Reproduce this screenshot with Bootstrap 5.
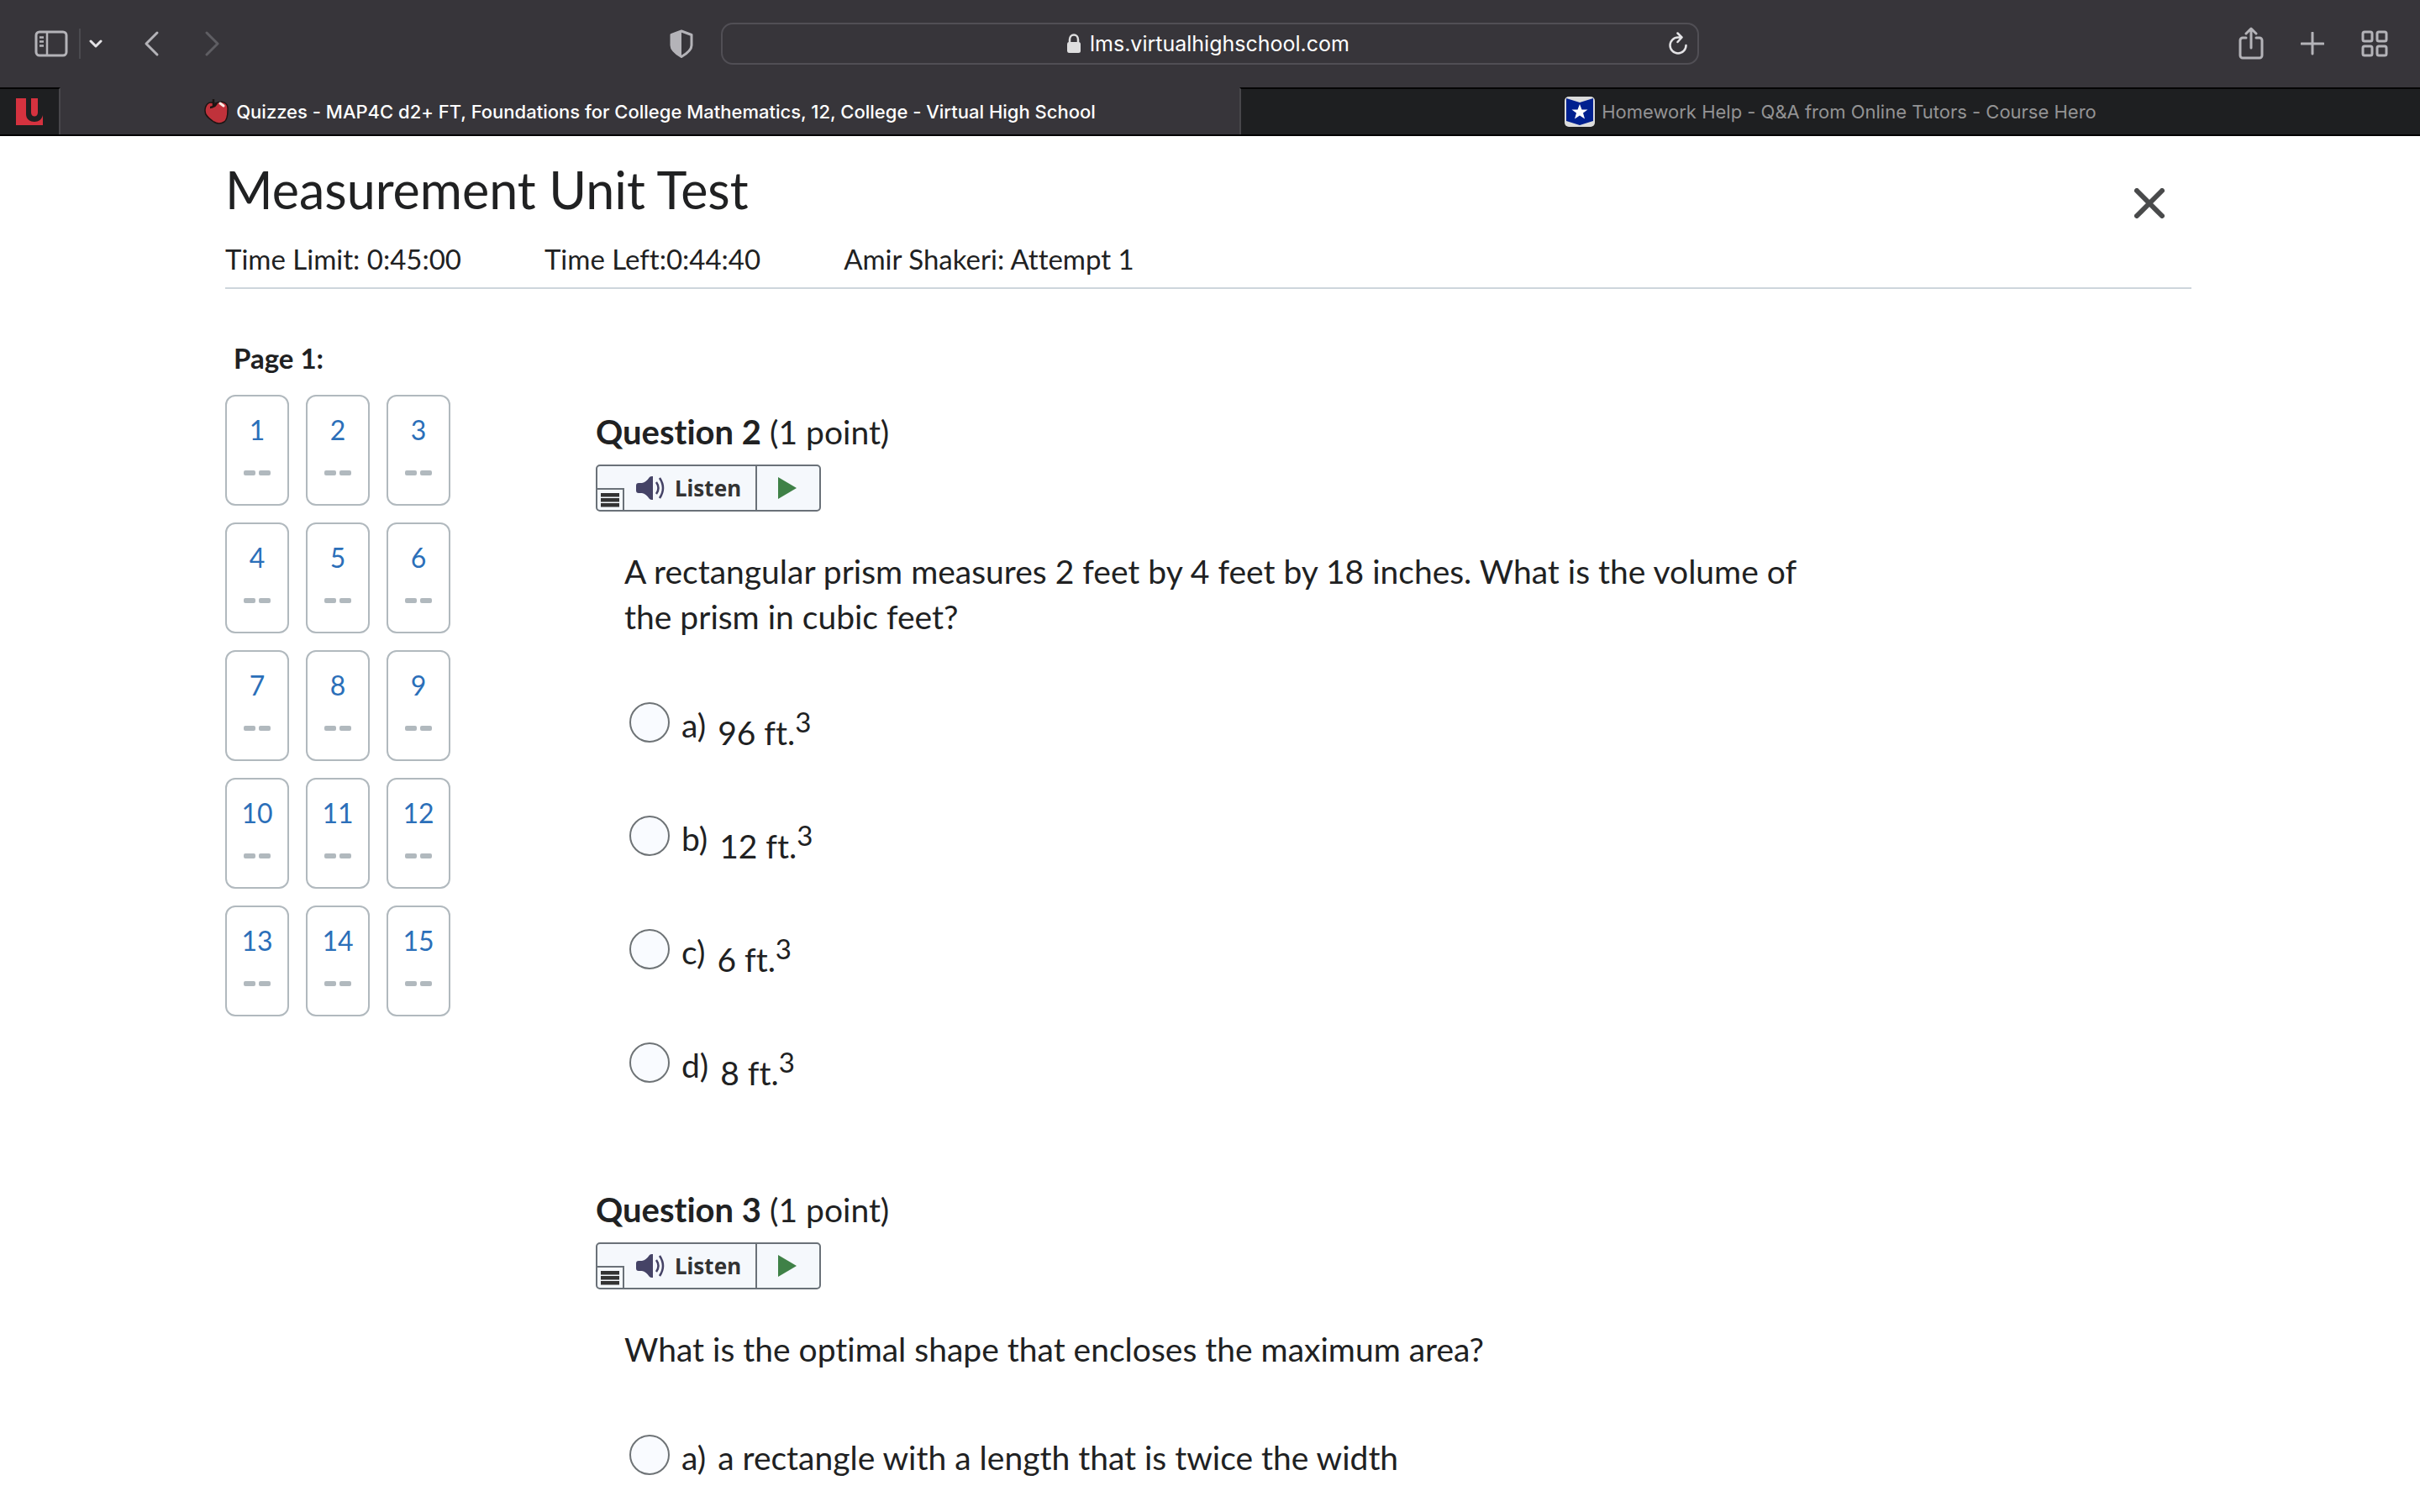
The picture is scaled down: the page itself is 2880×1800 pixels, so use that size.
<!DOCTYPE html>
<html lang="en">
<head>
<meta charset="utf-8">
<meta name="viewport" content="width=device-width, initial-scale=1">
<title>Quizzes - Virtual High School</title>
<link href="https://cdn.jsdelivr.net/npm/bootstrap@5.3.0/dist/css/bootstrap.min.css" rel="stylesheet">
<style>
  body { font-family: Lato, "Liberation Sans", sans-serif; font-variant-ligatures: none; color: #202122; background: #fff; font-size: 32px; line-height: 40px; }
  svg { display: block; flex: none; }

  /* browser chrome */
  .chrome { font-family: Inter, "Liberation Sans", sans-serif; background: #37353a; }
  .toolbar { display: grid; grid-template-columns: 1fr minmax(0, 1164px) 1fr; height: 104px; }
  .tool-start { padding-left: 41px; padding-right: 33px; }
  .tool-end { padding-right: 38px; gap: 44px; }
  .tool-btn { background: none; border: 0; padding: 0; color: #b4b3b8; }
  .tool-btn.dim { color: #5f5e63; }
  .tool-sep { width: 2px; height: 36px; background: #4b4a4f; margin: 0 10px 0 13px; }
  .address { height: 50px; border: 2px solid #514f55; border-radius: 14px; padding: 0 12px 0 34px; }
  .address-text { width: 316px; background: none; border: 0; padding: 0; color: #fff; font-size: 25px; line-height: 32px; outline: 0; }
  .tabs { height: 58px; border-bottom: 2px solid #000; }
  .tab { font-size: 22px; line-height: 28px; font-weight: 500; gap: 8px; text-decoration: none; flex: 1 1 0; min-width: 0; color: #939394; background: #1e1f21; border-top: 2px solid #050505; }
  .tab.pinned { flex: 0 0 72px; border-right: 2px solid #48474b; }
  .tab.current { background: #37353a; color: #fff; border-top-color: #37353a; }
  .tab.other { border-left: 2px solid #48474b; }

  /* quiz page */
  .quiz { padding: 24px 272px 0 268px; }
  .quiz-head { border-bottom: 2px solid #cdd5dc; padding-bottom: 14px; }
  .quiz-title { font-size: 61px; line-height: 80px; margin: 0 0 22px; font-weight: 400; }
  .quiz-meta { font-size: 33px; gap: 99px; }
  .close-btn { background: none; border: 0; padding: 0; margin: 38px 32px 0 0; color: #494a4b; }
  .quiz-nav { width: 268px; margin-right: 173px; }
  .nav-title { font-size: 33px; line-height: 40px; font-weight: 700; padding-left: 10px; margin: 0 0 24px; }
  .num-grid { display: grid; grid-template-columns: repeat(3, 76px); gap: 20px; }
  .num-box { height: 132px; border: 2px solid #b1b9be; border-radius: 12px; padding-top: 20px; color: #2b6fb9; text-decoration: none; gap: 28px; }
  .dashes { gap: 4px; }
  .dashes i { width: 14px; height: 6px; border-radius: 2px; background: #b1b9be; }
  .body-row { padding-top: 62px; }
  .questions { flex: 1 1 0; max-width: 1480px; padding-top: 81px; }
  .question { font-size: 39px; line-height: 54px; }
  .question + .question { margin-top: 118px; }
  .q-title { font-size: 39px; line-height: 54px; font-weight: 400; margin: 0 0 12px; }
  .q-title strong { font-size: 40px; font-weight: 700; }
  .listen { width: 268px; height: 56px; border: 2px solid #6a7178; border-radius: 5px; background: #f5f8fc; position: relative; }
  .listen button { background: none; border: 0; padding: 0; }
  .listen .listen-main { font-family: "Noto Sans", sans-serif; font-weight: 700; font-size: 26px; line-height: 36px; color: #333; width: 188px; padding-left: 46px; gap: 12px; }
  .listen .listen-play { flex: 1; border-left: 2px solid #6a7178; padding-right: 2px; }
  .listen .listen-menu { position: absolute; left: 0; bottom: 0; width: 32px; height: 26px; border-top: 2px solid #6a7178; border-right: 2px solid #6a7178; }
  .q-body { padding-left: 34px; padding-top: 44px; }
  .q-body p { margin: 0 0 75px; }
  .opts { gap: 81px; padding-left: 6px; }
  .opt { height: 54px; gap: 14px; }
  .opt input { appearance: none; width: 48px; height: 48px; border: 2px solid #6e7376; border-radius: 50%; background: #f9fbff; margin: 0; flex: none; }
  .opt label { gap: 14px; }
  .opt .measure { padding-top: 9px; }
  .opt sup { font-size: 33px; line-height: 0; top: 0; vertical-align: 15px; }
</style>
</head>
<body>
<header class="chrome">
  <div class="toolbar align-items-center">
    <div class="tool-start d-flex align-items-center">
      <button class="tool-btn" aria-label="Sidebar"><svg width="40" height="32" fill="none" stroke="currentColor" stroke-width="3"><rect x="2" y="2" width="36" height="28" rx="4"/><path d="M15 2v28M6 8.500h5M6 13.500h5M6 18.500h5" stroke-width="2.500"/></svg></button>
      <span class="tool-sep"></span>
      <button class="tool-btn" aria-label="Tab groups"><svg width="16" height="12" fill="none" stroke="#e4e3e6" stroke-width="3" stroke-linecap="round" stroke-linejoin="round"><path d="M2 3l6 6 6-6"/></svg></button>
      <button class="tool-btn ms-5" aria-label="Back"><svg width="20" height="32" fill="none" stroke="currentColor" stroke-width="3" stroke-linecap="round" stroke-linejoin="round"><path d="M17 3L4 16l13 13"/></svg></button>
      <button class="tool-btn dim ms-5" aria-label="Forward"><svg width="28" height="32" fill="none" stroke="currentColor" stroke-width="3" stroke-linecap="round" stroke-linejoin="round"><path d="M8 3l13 13L8 29"/></svg></button>
      <button class="tool-btn ms-auto" aria-label="Privacy report"><svg width="28" height="34" fill="none"><path d="M14 2L26 6.500V19c0 6-6 10-12 13.500C8 29 2 25 2 19V6.500z" stroke="currentColor" stroke-width="3" stroke-linejoin="round"/><path d="M14 2v30C8 29 2 25 2 19V6z" fill="currentColor"/></svg></button>
    </div>
    <div class="address d-flex align-items-center">
      <div class="flex-grow-1 d-flex justify-content-center align-items-center gap-2">
        <svg width="22" height="26" fill="none"><path d="M6 13V8a5 5.500 0 0 1 10 0v5" stroke="#dededf" stroke-width="2.500"/><rect x="3" y="11" width="16" height="13" rx="2.500" fill="#dededf"/></svg>
        <input class="address-text" type="text" aria-label="Address" value="lms.virtualhighschool.com">
      </div>
      <button class="tool-btn" aria-label="Reload"><svg width="22" height="28" fill="none" stroke="#e4e3e6" stroke-width="2.500" stroke-linecap="round" stroke-linejoin="round"><path d="M20.500 16A9.500 9.500 0 1 1 11 6.500h4M10.500 1.500l5 5-5 5.500"/></svg></button>
    </div>
    <div class="tool-end d-flex align-items-center justify-content-end">
      <button class="tool-btn" aria-label="Share"><svg width="30" height="40" fill="none" stroke="currentColor" stroke-width="3" stroke-linecap="round" stroke-linejoin="round"><path d="M9 13H5a3 3 0 0 0-3 3v18a3 3 0 0 0 3 3h20a3 3 0 0 0 3-3V16a3 3 0 0 0-3-3h-4M15 25V3M9 8l6-6 6 6"/></svg></button>
      <button class="tool-btn" aria-label="New tab"><svg width="28" height="28" fill="none" stroke="currentColor" stroke-width="3" stroke-linecap="round"><path d="M14 1v25M1 14h26"/></svg></button>
      <button class="tool-btn" aria-label="Tab overview"><svg width="32" height="32" fill="none" stroke="currentColor" stroke-width="3"><rect x="2" y="2" width="11" height="11" rx="2"/><rect x="19" y="2" width="11" height="11" rx="2"/><rect x="2" y="19" width="11" height="11" rx="2"/><rect x="19" y="19" width="11" height="11" rx="2"/></svg></button>
    </div>
  </div>
  <nav class="tabs d-flex" aria-label="Tabs">
    <a href="#" class="tab pinned d-flex align-items-center justify-content-center" aria-label="Pinned tab"><svg width="32" height="32"><path d="M0 0h32v32H0z" fill="#d5323f"/><path d="M12 0h6v17c0 6 8 6 8 0V0h6v20c-1 5-5 8-10 8s-10-3-10-9z" fill="#1e1f21"/></svg></a>
    <a href="#" class="tab current d-flex align-items-center justify-content-center"><svg width="30" height="32"><path d="M12 6C5 3 1 8 1 15c0 6 5 9 9 12 5 4 9 4 14 1 4-3 4-9 4-14C29 5 21 2 14 6z" fill="#c0323b" stroke="#1b1413" stroke-width="1.500"/><path d="M11 1v8M7 11c4 0 6-2 8-5" fill="none" stroke="#1b1413" stroke-width="2.500"/><path d="M19 6l4 3" stroke="#fbe9e2" stroke-width="3" stroke-linecap="round"/></svg><span class="text-truncate">Quizzes - MAP4C d2+ FT, Foundations for College Mathematics, 12, College - Virtual High School</span></a>
    <a href="#" class="tab other d-flex align-items-center justify-content-center"><svg width="36" height="36"><rect width="36" height="36" rx="5" fill="#dcdcdc"/><path d="M2 2l16 5 16-5v27l-16 5-16-5z" fill="#00208f"/><path d="M18 9l2.500 6.500h7l-5.500 4 2 7-6-4-6 4 2-7-5.500-4h7z" fill="#fff"/></svg><span class="text-truncate fw-normal">Homework Help - Q&amp;A from Online Tutors - Course Hero</span></a>
  </nav>
</header>

<main class="quiz">
  <div class="quiz-head">
    <div class="d-flex justify-content-between align-items-start">
      <h1 class="quiz-title">Measurement Unit Test</h1>
      <button class="close-btn" aria-label="Close"><svg width="36" height="36" stroke="currentColor" stroke-width="6" stroke-linecap="round"><path d="M3 3l30 30M33 3L3 33"/></svg></button>
    </div>
    <div class="quiz-meta d-flex"><span>Time Limit: 0:45:00</span><span>Time Left:0:44:40</span><span>Amir Shakeri: Attempt 1</span></div>
  </div>
  <div class="body-row d-flex align-items-start">
    <nav class="quiz-nav" aria-label="Questions">
      <h2 class="nav-title">Page 1:</h2>
      <div class="num-grid" id="nums"></div>
    </nav>
    <div class="questions">
      <section class="question">
        <h2 class="q-title"><strong>Question 2</strong> (1 point)</h2>
        <div class="listen d-flex">
          <button class="listen-main d-flex align-items-center"><svg width="34" height="28"><path d="M0 11q0-3 3-3h4q5-1 9-7 1-1 3-1h1v28h-1q-2 0-3-1-4-6-9-7H3q-3 0-3-3z" fill="#454366"/><path d="M24 7q5 7 0 14M28 2q8 12 0 24" fill="none" stroke="#454366" stroke-width="2.500"/></svg>Listen</button>
          <button class="listen-play d-flex align-items-center justify-content-center" aria-label="Play"><svg width="22" height="26"><path d="M0 0l22 13L0 26z" fill="#3f8147"/></svg></button>
          <button class="listen-menu" aria-label="Menu"><svg width="30" height="24"><path d="M4 4h22v4.500H4zM4 10h22v4.500H4zM4 16h22v4.500H4z" fill="#333"/></svg></button>
        </div>
        <div class="q-body">
          <p>A rectangular prism measures 2 feet by 4 feet by 18 inches. What is the volume of the prism in cubic feet?</p>
          <div class="opts d-flex flex-column">
            <div class="opt d-flex"><input type="radio" name="q2" id="q2a"><label class="d-flex" for="q2a"><span>a)</span><span class="measure">96 ft.<sup>3</sup></span></label></div>
            <div class="opt d-flex"><input type="radio" name="q2" id="q2b"><label class="d-flex" for="q2b"><span>b)</span><span class="measure">12 ft.<sup>3</sup></span></label></div>
            <div class="opt d-flex"><input type="radio" name="q2" id="q2c"><label class="d-flex" for="q2c"><span>c)</span><span class="measure">6 ft.<sup>3</sup></span></label></div>
            <div class="opt d-flex"><input type="radio" name="q2" id="q2d"><label class="d-flex" for="q2d"><span>d)</span><span class="measure">8 ft.<sup>3</sup></span></label></div>
          </div>
        </div>
      </section>
      <section class="question">
        <h2 class="q-title"><strong>Question 3</strong> (1 point)</h2>
        <div class="listen d-flex">
          <button class="listen-main d-flex align-items-center"><svg width="34" height="28"><path d="M0 11q0-3 3-3h4q5-1 9-7 1-1 3-1h1v28h-1q-2 0-3-1-4-6-9-7H3q-3 0-3-3z" fill="#454366"/><path d="M24 7q5 7 0 14M28 2q8 12 0 24" fill="none" stroke="#454366" stroke-width="2.500"/></svg>Listen</button>
          <button class="listen-play d-flex align-items-center justify-content-center" aria-label="Play"><svg width="22" height="26"><path d="M0 0l22 13L0 26z" fill="#3f8147"/></svg></button>
          <button class="listen-menu" aria-label="Menu"><svg width="30" height="24"><path d="M4 4h22v4.500H4zM4 10h22v4.500H4zM4 16h22v4.500H4z" fill="#333"/></svg></button>
        </div>
        <div class="q-body">
          <p>What is the optimal shape that encloses the maximum area?</p>
          <div class="opts d-flex flex-column">
            <div class="opt d-flex"><input type="radio" name="q3" id="q3a"><label class="d-flex" for="q3a"><span>a)</span><span>a rectangle with a length that is twice the width</span></label></div>
          </div>
        </div>
      </section>
    </div>
  </div>
</main>
<script src="https://cdn.jsdelivr.net/npm/bootstrap@5.3.0/dist/js/bootstrap.bundle.min.js"></script>
<script>
  const nums = document.getElementById('nums');
  for (let n = 1; n <= 15; n++) {
    nums.insertAdjacentHTML('beforeend', `<a href="#" class="num-box d-flex flex-column align-items-center"><span>${n}</span><span class="dashes d-flex"><i></i><i></i></span></a>`);
  }
</script>
</body>
</html>
